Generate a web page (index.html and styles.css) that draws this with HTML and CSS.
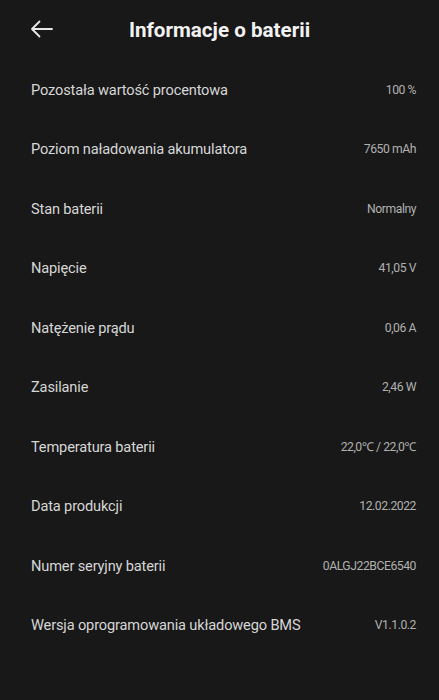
FILE: index.html
```html
<!DOCTYPE html>
<html lang="pl">
<head>
<meta charset="utf-8">
<link rel="stylesheet" href="styles.css">
</head>
<body>
<div class="page">
  <header class="header">
    <svg class="back" width="24" height="18" viewBox="0 0 24 18" fill="none" stroke="#e8e8e8" stroke-width="1.8" stroke-linecap="round" stroke-linejoin="round">
      <path d="M22 9H2M9.5 1.5L2 9l7.5 7.5"/>
    </svg>
    <h1 class="title">Informacje o baterii</h1>
  </header>
  <ul class="list">
    <li class="row"><span class="label">Pozostała wartość procentowa</span><span class="value">100 %</span></li>
    <li class="row"><span class="label">Poziom naładowania akumulatora</span><span class="value">7650 mAh</span></li>
    <li class="row"><span class="label">Stan baterii</span><span class="value">Normalny</span></li>
    <li class="row"><span class="label">Napięcie</span><span class="value">41,05 V</span></li>
    <li class="row"><span class="label">Natężenie prądu</span><span class="value">0,06 A</span></li>
    <li class="row"><span class="label">Zasilanie</span><span class="value">2,46 W</span></li>
    <li class="row"><span class="label">Temperatura baterii</span><span class="value">22,0℃ / 22,0℃</span></li>
    <li class="row"><span class="label">Data produkcji</span><span class="value">12.02.2022</span></li>
    <li class="row"><span class="label">Numer seryjny baterii</span><span class="value">0ALGJ22BCE6540</span></li>
    <li class="row"><span class="label">Wersja oprogramowania układowego BMS</span><span class="value">V1.1.0.2</span></li>
  </ul>
</div>
</body>
</html>
```

FILE: styles.css
```css
html, body {
  margin: 0;
  padding: 0;
  background: #181818;
}
body {
  font-family: Roboto, "Noto Sans", sans-serif;
  width: 439px;
  height: 700px;
  overflow: hidden;
}
.page {
  display: flex;
  flex-direction: column;
}
.header {
  position: relative;
  height: 60px;
  display: flex;
  align-items: center;
  justify-content: center;
}
.back {
  position: absolute;
  left: 30px;
  top: 20px;
}
.title {
  margin: 0;
  font-size: 20.6px;
  font-weight: 700;
  color: #f2f2f2;
  letter-spacing: 0;
}
.list {
  list-style: none;
  margin: 0;
  padding: 0;
}
.row {
  height: 59.5px;
  display: flex;
  align-items: center;
  justify-content: space-between;
  padding: 0 23px 0 31px;
}
.label {
  font-size: 14.6px;
  color: #d6d6d6;
  letter-spacing: -0.15px;
}
.value {
  font-size: 12.2px;
  color: #b0b0b0;
  letter-spacing: -0.45px;
}
```
